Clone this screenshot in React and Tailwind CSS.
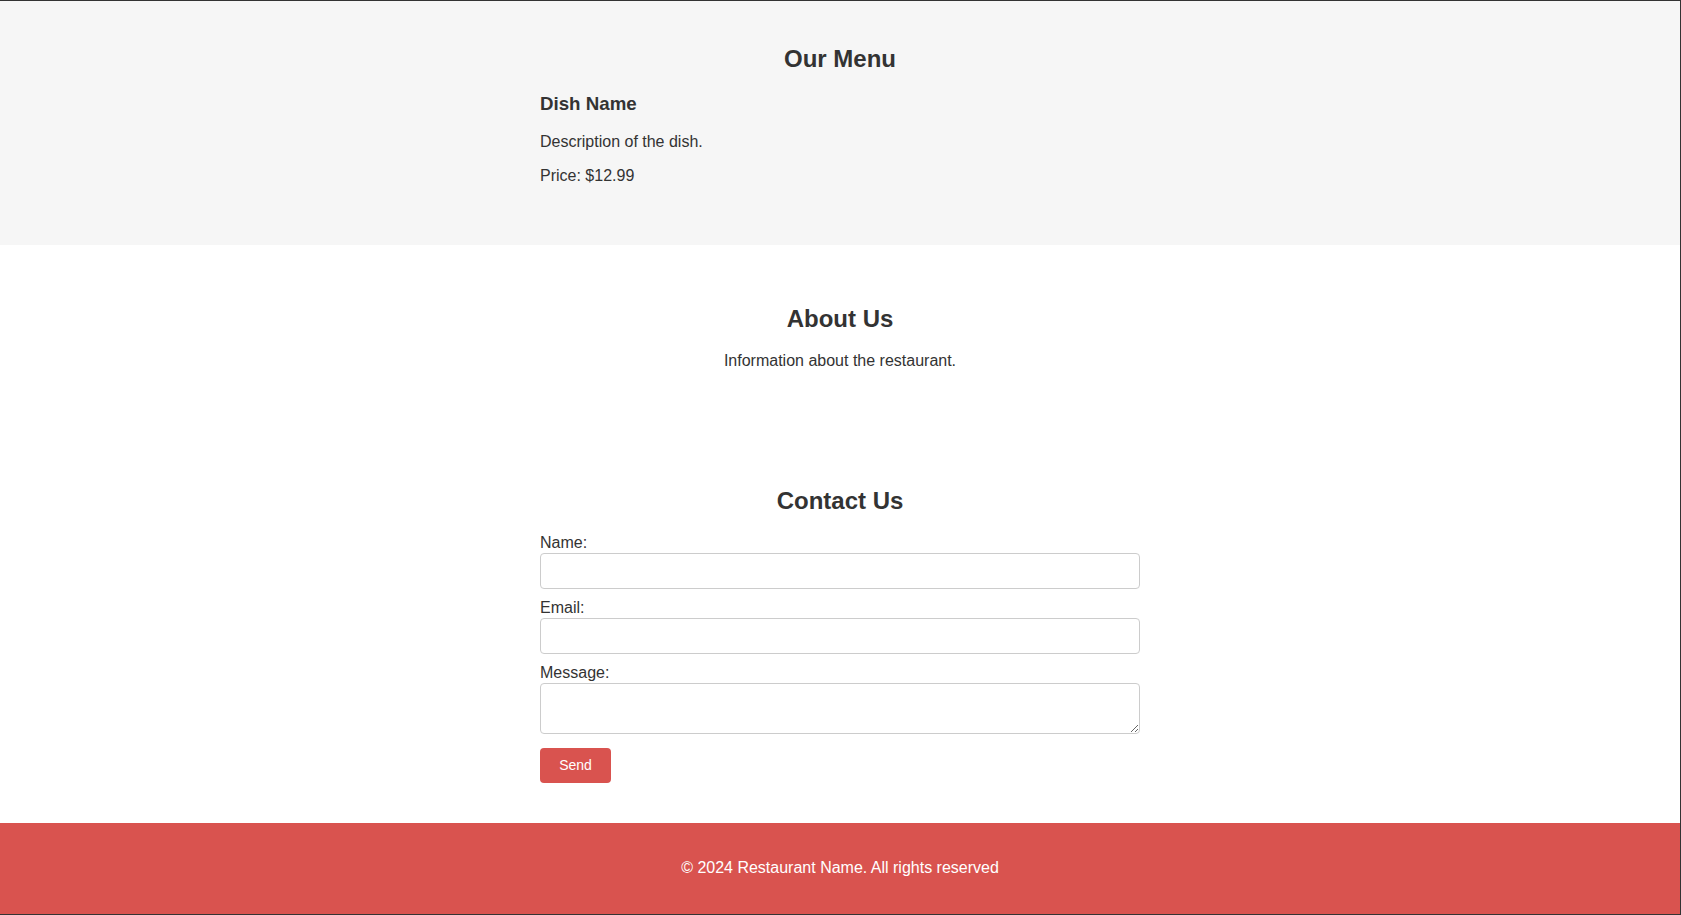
import React from "react";

const Field = ({ label, id, multiline }) => (
  <div className="mt-[10px] first:mt-[19px]">
    <label htmlFor={id} className="block text-[16px] leading-[18px] text-[#333]">
      {label}
    </label>
    {multiline ? (
      <textarea
        id={id}
        className="mt-px block h-[51px] w-full rounded-[4px] border border-[#ccc] bg-white px-2 py-2 text-[16px] outline-none"
      />
    ) : (
      <input
        id={id}
        type="text"
        className="mt-px block h-[36px] w-full rounded-[4px] border border-[#ccc] bg-white px-2 text-[16px] outline-none"
      />
    )}
  </div>
);

const App = () => {
  return (
    <div
      className="flex h-[915px] flex-col overflow-hidden border-t border-r border-b border-[#333] bg-white text-[#333]"
      style={{ fontFamily: '"Liberation Sans", Arial, sans-serif' }}
    >
      <section id="menu" className="h-[244px] shrink-0 bg-[#f6f6f6] pt-[44px]">
        <div className="mx-auto w-[600px]">
          <h2 className="text-center text-[24px] font-bold leading-[28px]">Our Menu</h2>
          <div className="mt-[20px]">
            <h3 className="text-[18.72px] font-bold leading-[22px]">Dish Name</h3>
            <p className="mt-[18px] text-[16px] leading-[18px]">Description of the dish.</p>
            <p className="mt-[16px] text-[16px] leading-[18px]">Price: $12.99</p>
          </div>
        </div>
      </section>

      <section id="about" className="shrink-0 pt-[60px] pb-[56px]">
        <div className="mx-auto w-[600px] text-center">
          <h2 className="text-[24px] font-bold leading-[28px]">About Us</h2>
          <p className="mt-[19px] text-[16px] leading-[18px]">Information about the restaurant.</p>
        </div>
      </section>

      <section id="contact" className="shrink-0 pt-[61px] pb-[40px]">
        <div className="mx-auto w-[600px]">
          <h2 className="text-center text-[24px] font-bold leading-[28px]">Contact Us</h2>
          <form onSubmit={(e) => e.preventDefault()}>
            <Field label="Name:" id="name" />
            <Field label="Email:" id="email" />
            <Field label="Message:" id="message" multiline />
            <button
              type="submit"
              className="mt-[14px] flex h-[35px] w-[71px] items-center justify-center rounded-[4px] bg-[#d9534f] text-[14px] font-medium text-white"
            >
              Send
            </button>
          </form>
        </div>
      </section>

      <footer className="flex-1 bg-[#d9534f] pt-[36px] text-center text-white">
        <p className="text-[16px] leading-[18px]">© 2024 Restaurant Name. All rights reserved</p>
      </footer>
    </div>
  );
};

export default App;
